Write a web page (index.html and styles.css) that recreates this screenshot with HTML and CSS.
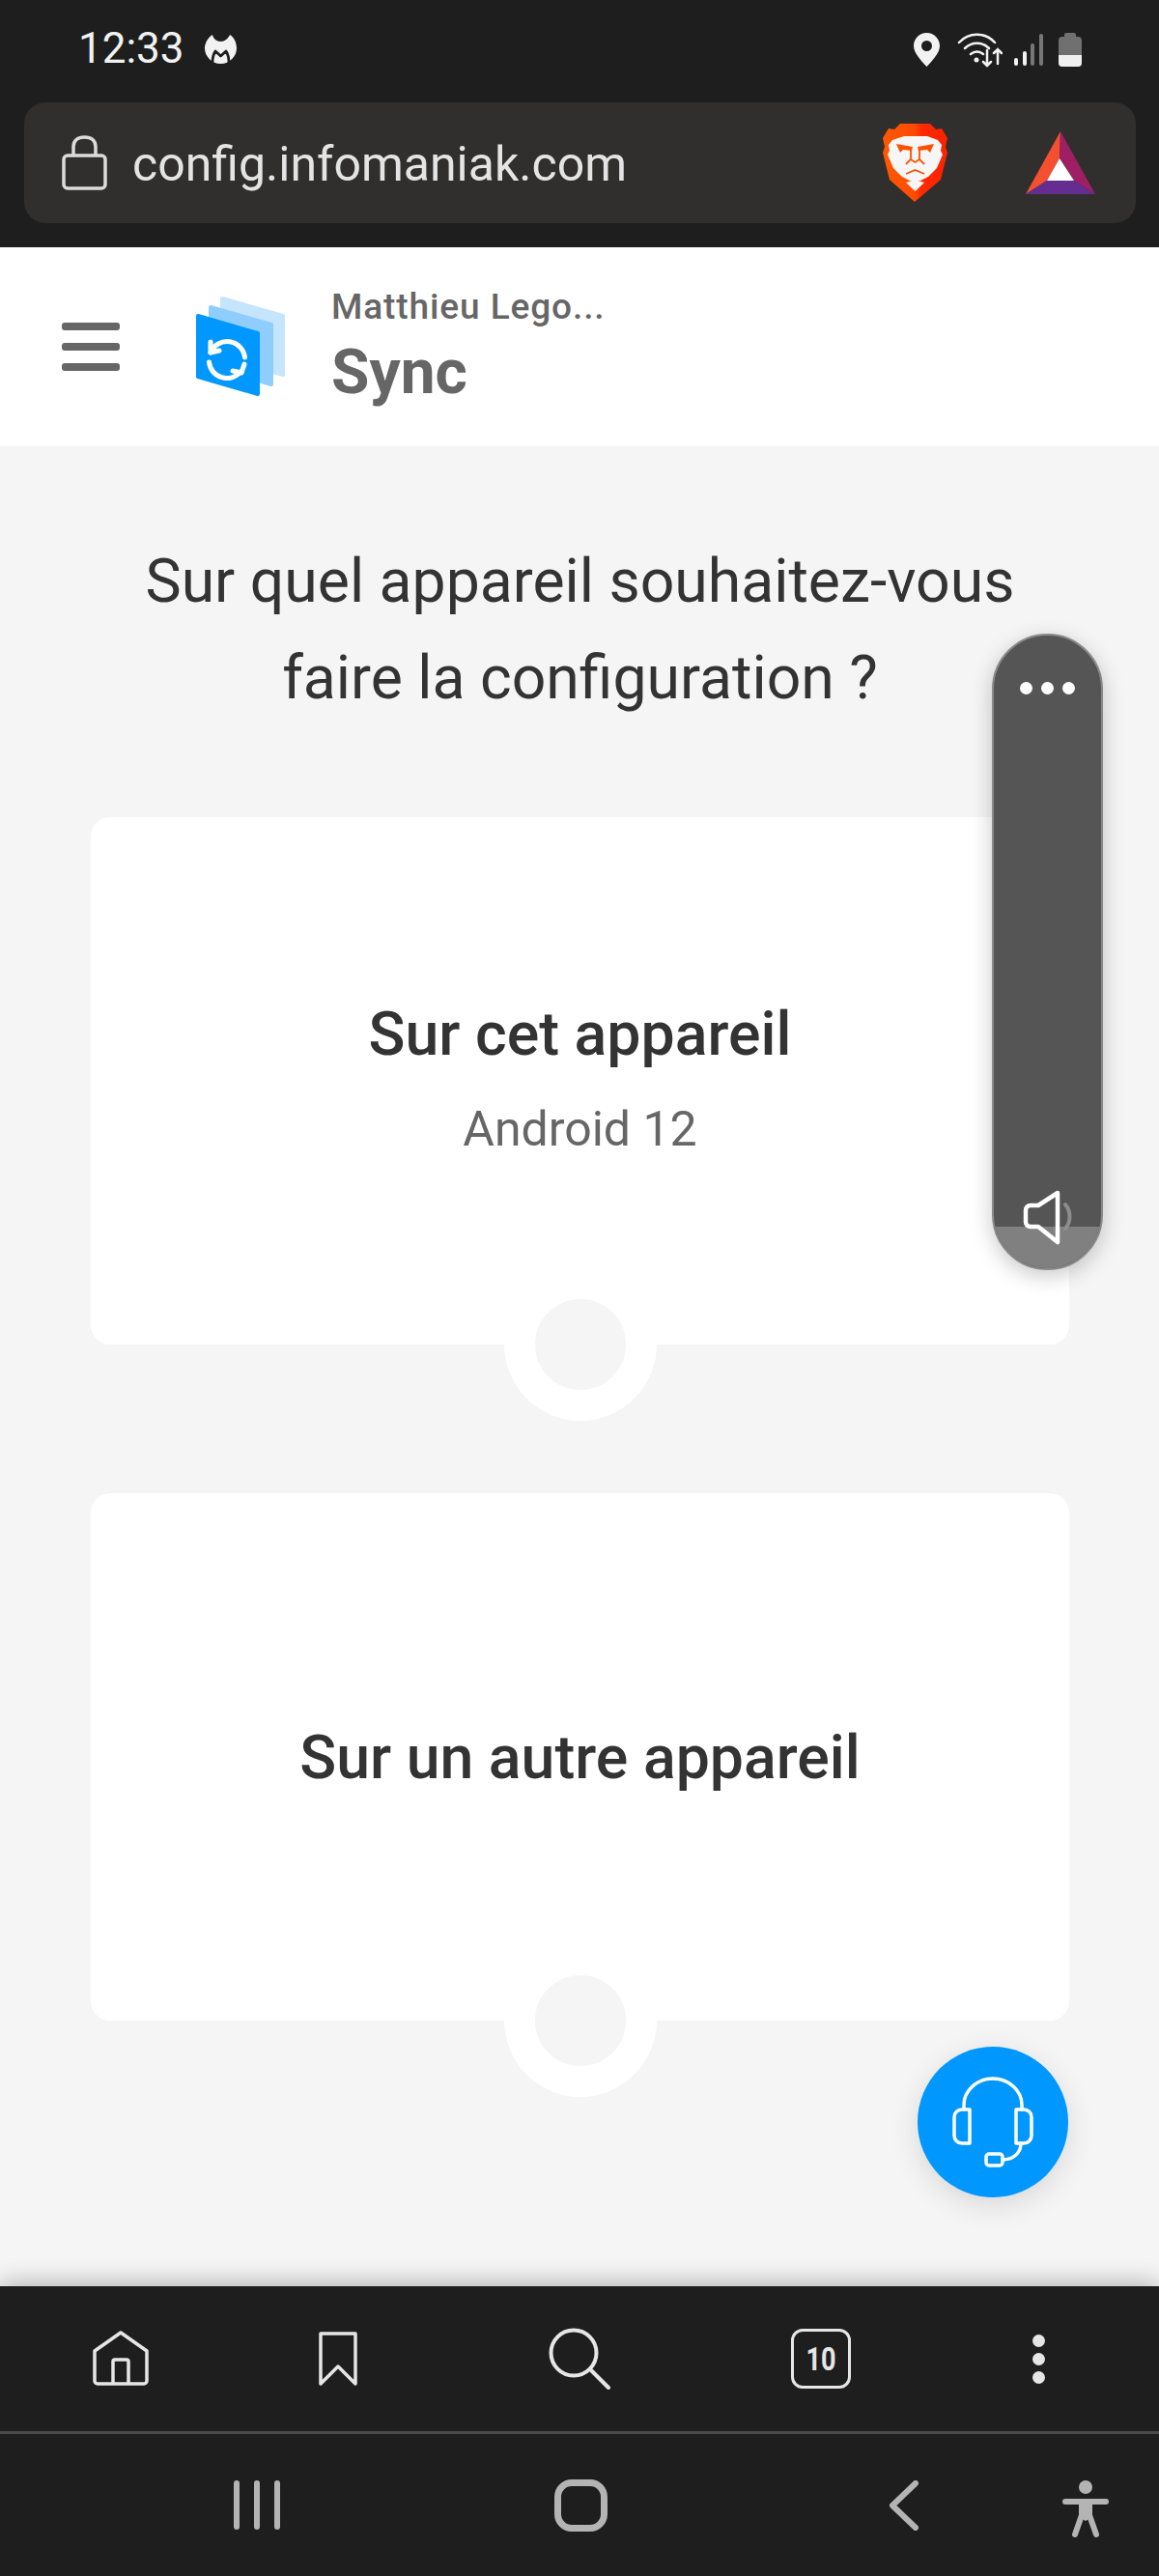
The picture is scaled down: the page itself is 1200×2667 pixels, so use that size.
FILE: index.html
```html
<!DOCTYPE html>
<html lang="fr">
<head>
    <meta charset="UTF-8">
    <meta name="viewport" content="width=device-width, initial-scale=1.0">
    <title>Sync - Infomaniak</title>
    <link rel="stylesheet" href="styles.css">
</head>
<body>
    <div class="browser-top">
        <div class="status-bar">
            <span class="clock">12:33</span>
            <svg class="mb-icon" viewBox="0 0 33 30">
                <path fill="#f2f2f2" d="M8 0c1 4 4 7 8.500 7S24 4 26 0c5 3 7 9 7 14 0 8-7 16-16.500 16S0 22 0 14C0 9 3 3 8 0z"/>
                <path fill="none" stroke="#1e1e1e" stroke-width="2.800" stroke-linejoin="round" d="M8 29c0-4 1-9 3-12l5.500 5 5.500-5c2 3 3 8 3 12"/>
            </svg>
            <div class="status-icons">
                <svg class="st-pin" viewBox="0 0 27 35">
                    <path fill="#f2f2f2" fill-rule="evenodd" d="M13.500 0C6 0 0 6 0 13.500 0 21 8 29 13.500 35 19 29 27 21 27 13.500 27 6 21 0 13.500 0zm0 8a5.500 5.500 0 1 1 0 11 5.500 5.500 0 0 1 0-11z"/>
                </svg>
                <svg class="st-wifi" viewBox="0 0 47 37">
                    <g fill="none" stroke="#f2f2f2" stroke-width="2.500" stroke-linecap="round">
                        <path d="M2 11C12 0 29 0 39 11"/>
                        <path d="M8 17c7-7 18-7 25 0"/>
                        <path d="M14 23c4-3 9-3 13 0"/>
                        <path d="M31 19v16M27 31l4 4 4-4"/>
                        <path d="M42 33V18M38 22l4-4 4 4"/>
                    </g>
                    <circle cx="20" cy="29" r="2.500" fill="#f2f2f2"/>
                </svg>
                <svg class="st-signal" viewBox="0 0 30 33">
                    <rect x="0" y="25" width="4" height="8" rx="2" fill="#f2f2f2"/>
                    <rect x="9" y="18" width="4" height="15" rx="2" fill="#f2f2f2"/>
                    <rect x="17" y="10" width="4" height="23" rx="2" fill="#777"/>
                    <rect x="26" y="0" width="4" height="33" rx="2" fill="#777"/>
                </svg>
                <div class="battery">
                    <div class="battery-level"></div>
                </div>
            </div>
        </div>
        <div class="url-bar">
            <svg class="lock" viewBox="0 0 47 57">
                <rect x="2" y="21" width="43" height="34" rx="4" fill="none" stroke="#dcdcdc" stroke-width="3.500"/>
                <path d="M12 21V12C12 5 17 2 23.500 2S35 5 35 12v9" fill="none" stroke="#dcdcdc" stroke-width="3.500"/>
            </svg>
            <span class="url-text">config.infomaniak.com</span>
            <svg class="brave" viewBox="0 0 67 81">
                <defs>
                    <linearGradient id="braveFill" x1="0" y1="0" x2="1" y2="0">
                        <stop offset="0" stop-color="#ff5a00"/>
                        <stop offset="0.5" stop-color="#ff4a00"/>
                        <stop offset="0.6" stop-color="#ff2a00"/>
                        <stop offset="1" stop-color="#fb2200"/>
                    </linearGradient>
                </defs>
                <path fill="url(#braveFill)" d="M18 0h31l6 6 6-1 6 10-2 9 2 6-7 28-27 23L7 58 0 30l2-6-2-9 6-10 6 1z"/>
                <path fill="#f6f6f6" d="M22 13h24l11 4 4 5-1 6 2 4-6 14-9 9-8 4H28l-8-4-9-9-6-14 2-4-1-6 4-5z"/>
                <path fill="#ff5000" d="M14 21l17 3-1 4-9-1-3 3zM53 21l-17 3 1 4 9-1 3 3z"/>
                <path fill="none" stroke="#ff5000" stroke-width="1.800" d="M29 27v10l-5 5M38 27v10l5 5M29 37l4.500 3 4.500-3M24 52l9.500-4 9.500 4"/>
                <path fill="#f6f6f6" d="M24 61l9.500-3 9.500 3-9.500 9z"/>
            </svg>
            <svg class="bat" viewBox="0 0 72 65">
                <polygon points="36,0 0,65 22,51 35,28" fill="#f4502f"/>
                <polygon points="36,0 72,65 50,51 35,28" fill="#9e1f63"/>
                <polygon points="0,65 72,65 50,51 22,51" fill="#662d91"/>
                <polygon points="35,28 50,51 22,51" fill="#fff"/>
            </svg>
        </div>
    </div>

    <header class="app-header">
        <div class="burger">
            <span></span>
            <span></span>
            <span></span>
        </div>
        <svg class="sync-logo" viewBox="0 0 94 106">
            <polygon points="27,3 90,21 90,82 27,64" fill="#c5e5fd" stroke="#c5e5fd" stroke-width="4" stroke-linejoin="round"/>
            <polygon points="15,12 78,30 78,92 15,74" fill="#8fcdfc" stroke="#8fcdfc" stroke-width="4" stroke-linejoin="round"/>
            <polygon points="2,21 64,39 64,102 2,84" fill="#0098ff" stroke="#0098ff" stroke-width="4" stroke-linejoin="round"/>
            <g fill="none" stroke="#fff" stroke-width="5" stroke-linecap="round" stroke-linejoin="round">
                <path d="M15 59A18.500 18.500 0 0 1 50.500 64"/>
                <path d="M13.500 69A18.500 18.500 0 0 0 46 79"/>
                <path d="M15 48v11l9-2"/>
                <path d="M50 71l-3 9-9-2"/>
            </g>
        </svg>
        <div class="app-title">
            <span class="account">Matthieu Lego...</span>
            <span class="product">Sync</span>
        </div>
    </header>

    <main class="content">
        <h1 class="question">Sur quel appareil souhaitez-vous<br>faire la configuration ?</h1>
        <div class="card">
            <div class="card-title">Sur cet appareil</div>
            <div class="card-sub">Android 12</div>
            <div class="notch"></div>
        </div>
        <div class="card">
            <div class="card-title">Sur un autre appareil</div>
            <div class="notch"></div>
        </div>
    </main>

    <div class="bottom-bar">
        <div class="tool-row">
            <div class="tool">
                <svg class="ic-home" viewBox="0 0 58 58">
                    <path d="M2 21L29 2l27 19v0V52a3 3 0 0 1-3 3H5a3 3 0 0 1-3-3z" fill="none" stroke="#e6e6e6" stroke-width="3.500" stroke-linejoin="round"/>
                    <path d="M21 55V32a2 2 0 0 1 2-2h12a2 2 0 0 1 2 2v23" fill="none" stroke="#e6e6e6" stroke-width="3.500"/>
                </svg>
            </div>
            <div class="tool">
                <svg class="ic-bookmark" viewBox="0 0 40 56">
                    <path d="M2 2h36v52L20 36 2 54z" fill="none" stroke="#e6e6e6" stroke-width="3.500" stroke-linejoin="round"/>
                </svg>
            </div>
            <div class="tool">
                <svg class="ic-search" viewBox="0 0 64 64">
                    <circle cx="26" cy="26" r="23.500" fill="none" stroke="#e6e6e6" stroke-width="4"/>
                    <path d="M43 43l19 19" fill="none" stroke="#e6e6e6" stroke-width="4" stroke-linecap="round"/>
                </svg>
            </div>
            <div class="tool">
                <div class="tab-count"><span>10</span></div>
            </div>
            <div class="tool">
                <div class="dots-v">
                    <span></span>
                    <span></span>
                    <span></span>
                </div>
            </div>
        </div>
        <div class="nav-row">
            <div class="nav-bars">
                <span></span>
                <span></span>
                <span></span>
            </div>
            <div class="nav-home"></div>
            <svg class="nav-back" viewBox="0 0 32 52">
                <path d="M28 3L4 26l24 23" fill="none" stroke="#b4b4b4" stroke-width="6" stroke-linecap="round" stroke-linejoin="round"/>
            </svg>
            <svg class="nav-a11y" viewBox="0 0 48 60">
                <circle cx="24" cy="7" r="7" fill="#b4b4b4"/>
                <path d="M3 22h42M13 56l7-20M35 56l-7-20" fill="none" stroke="#b4b4b4" stroke-width="6" stroke-linecap="round"/>
                <path d="M17 22h14v16l-7 4-7-4z" fill="#b4b4b4"/>
            </svg>
        </div>
    </div>

    <div class="sound-pill">
        <div class="pill-dots">
            <span></span>
            <span></span>
            <span></span>
        </div>
        <div class="pill-level"></div>
        <svg class="pill-speaker" viewBox="0 0 56 58">
            <path d="M44 15c6 7 6 18 0 25" fill="none" stroke="#8d8d8d" stroke-width="4" stroke-linecap="round"/>
            <path d="M36 3L16 16H8a5 5 0 0 0-5 5v12a5 5 0 0 0 5 5h8l20 16z" fill="none" stroke="#fff" stroke-width="4.500" stroke-linejoin="round"/>
        </svg>
    </div>

    <div class="support-btn">
        <svg viewBox="0 0 156 156">
            <g fill="none" stroke="#fff" stroke-width="3.500" stroke-linecap="round" stroke-linejoin="round">
                <path d="M48 65V60c0-14 13-27 30-27s30 13 30 27v5"/>
                <path d="M54 65H46a8 8 0 0 0-8 8v19a8 8 0 0 0 8 8h8z"/>
                <path d="M102 65h8a8 8 0 0 1 8 8v19a8 8 0 0 1-8 8h-8z"/>
                <path d="M107 100c0 10-8 17-19 17"/>
                <rect x="71" y="111" width="17" height="12" rx="3"/>
            </g>
        </svg>
    </div>
</body>
</html>
```
FILE: styles.css
```css
body {
    margin: 0;
    position: relative;
    width: 1200px;
    height: 2667px;
    overflow: hidden;
    display: flex;
    flex-direction: column;
    font-family: Roboto, "Liberation Sans", sans-serif;
    background-color: #f5f5f5;
    color: #333333;
}

/* browser chrome */
.browser-top {
    height: 256px;
    background-color: #1e1e1e;
}
.status-bar {
    height: 106px;
    display: flex;
    align-items: center;
    padding: 0 80px 0 81px;
    box-sizing: border-box;
}
.clock {
    font-size: 44px;
    color: #f2f2f2;
    position: relative;
    top: -3px;
}
.mb-icon {
    width: 33px;
    height: 30px;
    margin-left: 21px;
    position: relative;
    top: -2px;
}
.status-icons {
    margin-left: auto;
    display: flex;
    align-items: center;
    position: relative;
    top: -2px;
}
.st-pin {
    width: 27px;
    height: 35px;
}
.st-wifi {
    width: 47px;
    height: 37px;
    margin-left: 18px;
}
.st-signal {
    width: 30px;
    height: 33px;
    margin-left: 12px;
}
.battery {
    width: 24px;
    height: 31px;
    margin-left: 16px;
    margin-top: 4px;
    border-radius: 4px;
    background-color: #707070;
    position: relative;
}
.battery:before {
    content: "";
    position: absolute;
    top: -4px;
    left: 6px;
    width: 12px;
    height: 5px;
    border-radius: 2px 2px 0 0;
    background-color: #707070;
}
.battery-level {
    position: absolute;
    left: 0;
    right: 0;
    bottom: 0;
    height: 12px;
    border-radius: 0 0 4px 4px;
    background-color: #f0f0f0;
}
.url-bar {
    height: 125px;
    margin: 0 24px 0 25px;
    padding: 0 42px 0 39px;
    border-radius: 22px;
    background-color: #302f2e;
    display: flex;
    align-items: center;
}
.lock {
    width: 47px;
    height: 57px;
    margin-right: 26px;
}
.url-text {
    font-size: 50px;
    color: #e4e4e4;
    padding-top: 3px;
}
.brave {
    width: 67px;
    height: 81px;
    margin-left: auto;
}
.bat {
    width: 72px;
    height: 65px;
    margin-left: 81px;
}

/* app header */
.app-header {
    height: 206px;
    background-color: #ffffff;
    display: flex;
    align-items: center;
    flex-shrink: 0;
}
.burger {
    width: 60px;
    margin-left: 64px;
    display: flex;
    flex-direction: column;
    gap: 13px;
}
.burger span {
    display: block;
    height: 8px;
    border-radius: 3px;
    background-color: #666666;
}
.sync-logo {
    width: 94px;
    height: 106px;
    margin-left: 79px;
}
.app-title {
    margin-left: 46px;
    display: flex;
    flex-direction: column;
}
.account {
    font-size: 37px;
    font-weight: 500;
    letter-spacing: 0.9px;
    color: #666666;
    line-height: 44px;
}
.product {
    margin-top: 10px;
    font-size: 64px;
    font-weight: 700;
    color: #666666;
    line-height: 72px;
}

/* page */
.content {
    flex: 1;
    padding: 90px 93px 0 94px;
}
.question {
    margin: 0 0 94px;
    font-size: 62.5px;
    font-weight: 400;
    line-height: 100px;
    text-align: center;
    color: #333333;
}
.card {
    position: relative;
    height: 546px;
    margin-bottom: 154px;
    border-radius: 20px;
    background-color: #ffffff;
    display: flex;
    flex-direction: column;
    align-items: center;
    justify-content: center;
}
.card-title {
    font-size: 62.6px;
    font-weight: 500;
    color: #333333;
}
.card-sub {
    margin-top: 33px;
    margin-bottom: 7px;
    font-size: 50px;
    color: #666666;
}
.notch {
    position: absolute;
    left: 50%;
    bottom: -79px;
    width: 94px;
    height: 94px;
    margin-left: -79px;
    border: 32px solid #ffffff;
    border-radius: 50%;
    background-color: #f5f5f5;
}

/* bottom bars */
.bottom-bar {
    height: 300px;
    flex-shrink: 0;
    background-color: #1e1e1e;
    box-shadow: 0 -3px 24px rgba(0, 0, 0, 0.28);
    position: relative;
}
.tool-row {
    height: 150px;
    display: grid;
    grid-template-columns: 250px 200px 300px 200px 250px;
    border-bottom: 3px solid #4a4a4a;
}
.tool {
    display: flex;
    align-items: center;
    justify-content: center;
}
.ic-home {
    width: 58px;
    height: 58px;
}
.ic-bookmark {
    width: 40px;
    height: 56px;
}
.ic-search {
    width: 64px;
    height: 64px;
}
.tab-count {
    width: 56px;
    height: 56px;
    border: 3.5px solid #e6e6e6;
    border-radius: 12px;
    display: flex;
    align-items: center;
    justify-content: center;
    font-size: 33px;
    font-weight: 700;
    color: #e6e6e6;
}
.tab-count span {
    display: inline-block;
    transform: scaleX(0.82);
}
.dots-v {
    display: flex;
    flex-direction: column;
    gap: 6px;
}
.dots-v span {
    display: block;
    width: 13px;
    height: 13px;
    border-radius: 50%;
    background-color: #e6e6e6;
}
.nav-row {
    height: 147px;
    display: flex;
    align-items: center;
    padding-left: 242px;
}
.nav-bars {
    display: flex;
    gap: 15px;
}
.nav-bars span {
    display: block;
    width: 6px;
    height: 51px;
    border-radius: 3px;
    background-color: #b4b4b4;
}
.nav-home {
    width: 41px;
    height: 40px;
    margin-left: 284px;
    border: 7px solid #b4b4b4;
    border-radius: 18px;
}
.nav-back {
    width: 32px;
    height: 52px;
    margin-left: 291px;
}
.nav-a11y {
    width: 48px;
    height: 60px;
    margin-left: 148px;
    position: relative;
    top: 4px;
}

/* floating things */
.sound-pill {
    position: absolute;
    left: 1027px;
    top: 656px;
    width: 115px;
    height: 659px;
    box-sizing: border-box;
    border: 2px solid #8a8a8a;
    border-radius: 58px;
    background-color: #555555;
    overflow: hidden;
    box-shadow: 0 6px 22px rgba(0, 0, 0, 0.22);
}
.pill-dots {
    display: flex;
    justify-content: center;
    gap: 9px;
    margin-top: 48px;
}
.pill-dots span {
    display: block;
    width: 13px;
    height: 13px;
    border-radius: 50%;
    background-color: #ffffff;
}
.pill-level {
    position: absolute;
    left: 0;
    right: 0;
    bottom: 0;
    height: 43px;
    background-color: #808080;
}
.pill-speaker {
    position: absolute;
    left: 30px;
    top: 574px;
    width: 56px;
    height: 58px;
}
.support-btn {
    position: absolute;
    left: 950px;
    top: 2119px;
    width: 156px;
    height: 156px;
    border-radius: 50%;
    background-color: #0098ff;
    box-shadow: 0 8px 30px rgba(0, 0, 0, 0.12);
}
.support-btn svg {
    display: block;
    width: 156px;
    height: 156px;
}
```
